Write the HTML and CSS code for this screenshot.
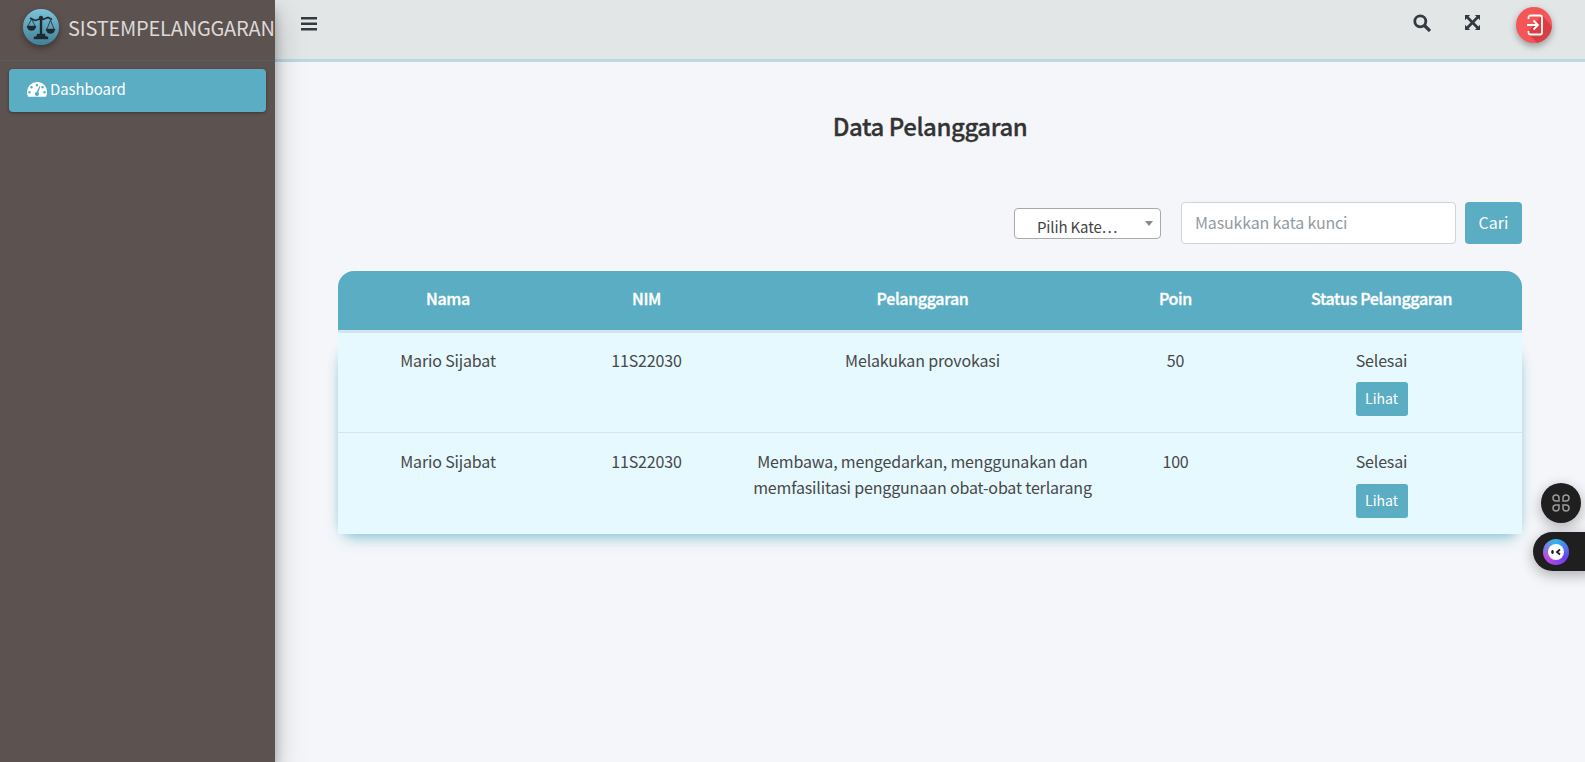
FILE: index.html
```html
<!DOCTYPE html>
<html lang="id">
<head>
<meta charset="utf-8">
<title>Data Pelanggaran</title>
<link rel="stylesheet" href="styles.css">
</head>
<body>
<div class="app">
  <aside class="sidebar">
    <div class="brand">
      <span class="logo">
        <svg viewBox="0 0 36 36" width="36" height="36"><g fill="#1f2a30" stroke="#1f2a30"><path d="M7 9l5 2.500 5-1.500 3 .5 5-2 4 2" fill="none" stroke-width="1.600"/><circle cx="18" cy="9" r="1.800"/><path d="M17 11h2v14h-2z" stroke-width=".4"/><path d="M11 30v-2l3-1v-2h8v2l3 1v2z" stroke-width=".4"/><path d="M4 17a4.500 4.500 0 0 0 9 0z" stroke-width=".4"/><path d="M23 20a4.500 4.500 0 0 0 9 0z" stroke-width=".4"/><path d="M8.500 10L5 17M8.500 10L12 17M27.500 11L24 20M27.500 11L31 20" fill="none" stroke-width=".8"/></g></svg>
      </span>
      <span class="brand-text">SISTEMPELANGGARAN</span>
    </div>
    <nav class="nav">
      <a class="nav-item">
        <svg class="nav-icon" viewBox="0 0 20 16" width="20" height="16"><path fill="#fff" fill-rule="evenodd" d="M10 1a10 10 0 0 0-10 10c0 1.700.4 3.300 1.100 4.700h17.800A10 10 0 0 0 10 1zM10 3a1.300 1.300 0 1 1 0 2.600A1.300 1.300 0 0 1 10 3zM4.500 5a1.300 1.300 0 1 1 0 2.600 1.300 1.300 0 0 1 0-2.600zM15.500 5a1.300 1.300 0 1 1 0 2.600 1.300 1.300 0 0 1 0-2.600zM2.500 10a1.300 1.300 0 1 1 0 2.600 1.300 1.300 0 0 1 0-2.600zM17.500 10a1.300 1.300 0 1 1 0 2.600 1.300 1.300 0 0 1 0-2.600zM12.500 5l.9.300-2 6.300a2 2 0 1 1-1.800-.6z"/></svg>
        <span>Dashboard</span>
      </a>
    </nav>
  </aside>
  <div class="main">
    <header class="topbar">
      <svg class="burger" viewBox="0 0 16 14" width="16" height="14"><path fill="#343a40" d="M0 0h16v2.500H0zM0 5.500h16V8H0zM0 11h16v2.500H0z"/></svg>
      <div class="top-actions">
        <svg class="top-icon" viewBox="0 0 18 18" width="18" height="18"><circle cx="7.300" cy="7.300" r="5.500" fill="none" stroke="#343a40" stroke-width="2.800"/><path d="M11.500 11.500L17 17" stroke="#343a40" stroke-width="3.200"/></svg>
        <svg class="top-icon expand" viewBox="0 0 16 16" width="15" height="15"><path fill="#343a40" d="M0 0h5.500L3.800 1.700 8 5.900l4.200-4.200L10.500 0H16v5.500l-1.700-1.700L10.100 8l4.200 4.200 1.700-1.700V16h-5.500l1.700-1.700L8 10.100l-4.200 4.200L5.500 16H0v-5.500l1.700 1.700L5.900 8 1.700 3.800 0 5.500z"/></svg>
        <span class="logout">
          <svg viewBox="0 0 36 36" width="36" height="36"><path fill="#d93f42" d="M26 8l10 12a18 18 0 0 1-15 16L11 26z"/><g fill="none" stroke="#fff" stroke-width="1.800"><path d="M12.500 12V10.500a2 2 0 0 1 2-2h9.500a2 2 0 0 1 2 2v15a2 2 0 0 1-2 2h-9.500a2 2 0 0 1-2-2V24"/><path d="M11 18h11M17.500 13.500L22 18l-4.500 4.500"/></g></svg>
        </span>
      </div>
    </header>
    <main class="content">
      <h1 class="title">Data Pelanggaran</h1>
      <form class="filters">
        <div class="select"><span class="select-text">Pilih Kate…</span><span class="caret"></span></div>
        <div class="search">Masukkan kata kunci</div>
        <button type="button" class="btn-cari">Cari</button>
      </form>
      <div class="table-card">
        <div class="table-clip">
        <table class="table">
          <thead>
            <tr><th class="c1">Nama</th><th class="c2">NIM</th><th class="c3">Pelanggaran</th><th class="c4">Poin</th><th class="c5">Status Pelanggaran</th></tr>
          </thead>
          <tbody>
            <tr class="row-first">
              <td>Mario Sijabat</td><td>11S22030</td><td>Melakukan provokasi</td><td>50</td>
              <td><div>Selesai</div><button type="button" class="btn-lihat">Lihat</button></td>
            </tr>
            <tr class="row-last">
              <td>Mario Sijabat</td><td>11S22030</td><td>Membawa, mengedarkan, menggunakan dan memfasilitasi penggunaan obat-obat terlarang</td><td>100</td>
              <td><div>Selesai</div><button type="button" class="btn-lihat">Lihat</button></td>
            </tr>
          </tbody>
        </table>
        </div>
      </div>
    </main>
  </div>
</div>
<div class="float-round">
  <svg viewBox="0 0 20 20" width="20" height="20"><g fill="none" stroke="#9a9a9a" stroke-width="1.500"><path d="M5 2a3 3 0 0 1 3 3v3H5a3 3 0 0 1 0-6zM15 2a3 3 0 0 1 0 6h-3V5a3 3 0 0 1 3-3zM5 18a3 3 0 0 1 0-6h3v3a3 3 0 0 1-3 3zM15 18a3 3 0 0 1-3-3v-3h3a3 3 0 0 1 0 6z"/></g></svg>
</div>
<div class="float-pill">
  <span class="bot"><svg viewBox="0 0 18 18" width="18" height="18"><circle cx="9" cy="9" r="8" fill="#fff"/><ellipse cx="5.500" cy="9" rx="1.300" ry="2" fill="#1d1d1d"/><path d="M13 6.500L10 9l3 2.500" fill="none" stroke="#1d1d1d" stroke-width="1.800"/></svg></span>
</div>
</body>
</html>
```
FILE: styles.css
```css
* { box-sizing: border-box; }
html, body { margin: 0; height: 100%; overflow: hidden; }
body {
  font-family: "Noto Sans CJK SC", "Liberation Sans", sans-serif;
  font-size: 16px;
  color: #495057;
  background: #f4f6f9;
}
.app { display: flex; height: 762px; }
.sidebar {
  width: 275px;
  flex: none;
  background: #5c5250;
  box-shadow: 0 14px 28px rgba(0,0,0,.25), 0 10px 10px rgba(0,0,0,.22);
  position: relative;
  z-index: 2;
}
.brand {
  height: 61px;
  display: flex;
  align-items: flex-start;
  padding: 9px 0 0 23px;
  border-bottom: 1px solid #4b6069;
  white-space: nowrap;
  overflow: hidden;
}
.logo {
  width: 36px;
  height: 36px;
  border-radius: 50%;
  background: linear-gradient(180deg, #7cc3d8, #3f8199);
  box-shadow: 0 3px 6px rgba(0,0,0,.35);
  flex: none;
  display: block;
}
.logo svg { display: block; }
.brand-text { margin-left: 9px; font-size: 20px; line-height: 38px; color: #dcd9d8; letter-spacing: -.2px; }
.nav { padding: 8px 9px 0; }
.nav-item {
  display: flex;
  align-items: center;
  height: 43px;
  padding: 0 0 4px 18px;
  background: #5badc4;
  border-radius: 4px;
  color: #fff;
  font-size: 15px;
  letter-spacing: -.08px;
  box-shadow: 0 1px 3px rgba(0,0,0,.35);
}
.nav-icon { margin-right: 3px; }
.main { flex: 1; min-width: 0; display: flex; flex-direction: column; }
.topbar {
  height: 62px;
  flex: none;
  background: #e3e6e7;
  border-bottom: 3px solid #bcd8e3;
  display: flex;
  align-items: flex-start;
  padding: 17px 33px 0 26px;
}
.top-actions { margin-left: auto; display: flex; align-items: flex-start; }
.burger { display: block; }
.top-icon { display: block; margin-top: -3px; }
.expand { margin-left: 34px; margin-top: -2px; }
.logout {
  margin-left: 36px;
  margin-top: -10px;
  width: 36px;
  height: 36px;
  border-radius: 50%;
  overflow: hidden;
  background: #f65557;
  box-shadow: 0 3px 7px rgba(0,0,0,.35);
  display: block;
}
.logout svg { display: block; }
.content { padding: 0 63px 0 63px; }
.title {
  margin: 49px 0 0;
  font-size: 24px;
  line-height: 29px;
  font-weight: 500;
  letter-spacing: -.45px;
  -webkit-text-stroke: .3px #333;
  color: #333;
  text-align: center;
}
.filters { display: flex; justify-content: flex-end; align-items: flex-start; margin-top: 62px; }
.select {
  width: 147px;
  height: 31px;
  margin-top: 6px;
  background: #fff;
  border: 1px solid #aaa;
  border-radius: 4px;
  position: relative;
  padding-left: 22px;
  line-height: 36px;
  font-size: 15px;
  letter-spacing: -.15px;
  overflow: hidden;
  color: #444;
}
.select-text { display: block; }
.caret {
  position: absolute;
  right: 7px;
  top: 12px;
  border: 4px solid transparent;
  border-top: 5px solid #888;
  border-bottom: 0;
}
.search {
  width: 275px;
  height: 42px;
  margin-left: 20px;
  background: #fff;
  border: 1px solid #ced4da;
  border-radius: 4px;
  padding-left: 13px;
  line-height: 38px;
  letter-spacing: -.16px;
  color: #939ba2;
}
.btn-cari {
  margin-left: 9px;
  width: 57px;
  height: 42px;
  background: #5badc4;
  color: #fff;
  border: 0;
  border-radius: 4px;
  font: inherit;
  padding: 0 0 2px;
}
.table-card {
  margin-top: 27px;
  position: relative;
}
.table-card::before {
  content: "";
  position: absolute;
  inset: 74px 0 0 0;
  border-radius: 16px;
  box-shadow: 0 8px 14px -4px rgba(91,173,196,.6), 0 0 10px rgba(91,173,196,.25);
}
.table-clip { position: relative; border-radius: 16px 16px 0 0; overflow: hidden; }
.table { width: 100%; border-collapse: collapse; table-layout: fixed; background: #e5f9ff; }
.table th {
  height: 60px;
  background: #5badc4;
  color: #fff;
  font-weight: 500;
  letter-spacing: -.35px;
  -webkit-text-stroke: .35px #fff;
  text-align: center;
  border-bottom: 3px solid #d3e5eb;
  padding: 0 0 5px;
  vertical-align: middle;
}
.c1 { width: 220px; }
.c2 { width: 177px; }
.c3 { width: 375px; }
.c4 { width: 131px; }
.c5 { width: auto; }
.table td {
  line-height: 26.4px;
  letter-spacing: -.16px;
  text-align: center;
  vertical-align: top;
  color: #484848;
}
.row-first td { height: 101px; padding: 14px 12px 0; }
.row-last td { height: 102px; padding: 15px 12px 0; border-top: 1px solid #dee2e6; }
.btn-lihat {
  display: block;
  margin: 0 auto;
  width: 52px;
  height: 34px;
  background: #5badc4;
  color: #fff;
  border: 0;
  border-radius: 3px;
  font: inherit;
  font-size: 14px;
  padding: 0;
}
.row-first .btn-lihat { margin-top: 8.6px; }
.row-last .btn-lihat { margin-top: 9.6px; }
.float-round {
  position: absolute;
  left: 1541px;
  top: 483px;
  width: 40px;
  height: 40px;
  border-radius: 50%;
  background: #1f1f1f;
  display: flex;
  align-items: center;
  justify-content: center;
  box-shadow: 0 4px 14px rgba(0,0,0,.3);
}
.float-pill {
  position: absolute;
  left: 1533px;
  top: 532px;
  width: 60px;
  height: 39px;
  border-radius: 20px 0 0 20px;
  background: #1f1f1f;
  box-shadow: 0 4px 14px rgba(0,0,0,.3);
  display: flex;
  align-items: center;
  padding-left: 10px;
}
.bot {
  width: 26px;
  height: 26px;
  border-radius: 50%;
  background: conic-gradient(#30b8e8, #6a3ff0, #c04be0, #30b8e8);
  display: flex;
  align-items: center;
  justify-content: center;
}
```
